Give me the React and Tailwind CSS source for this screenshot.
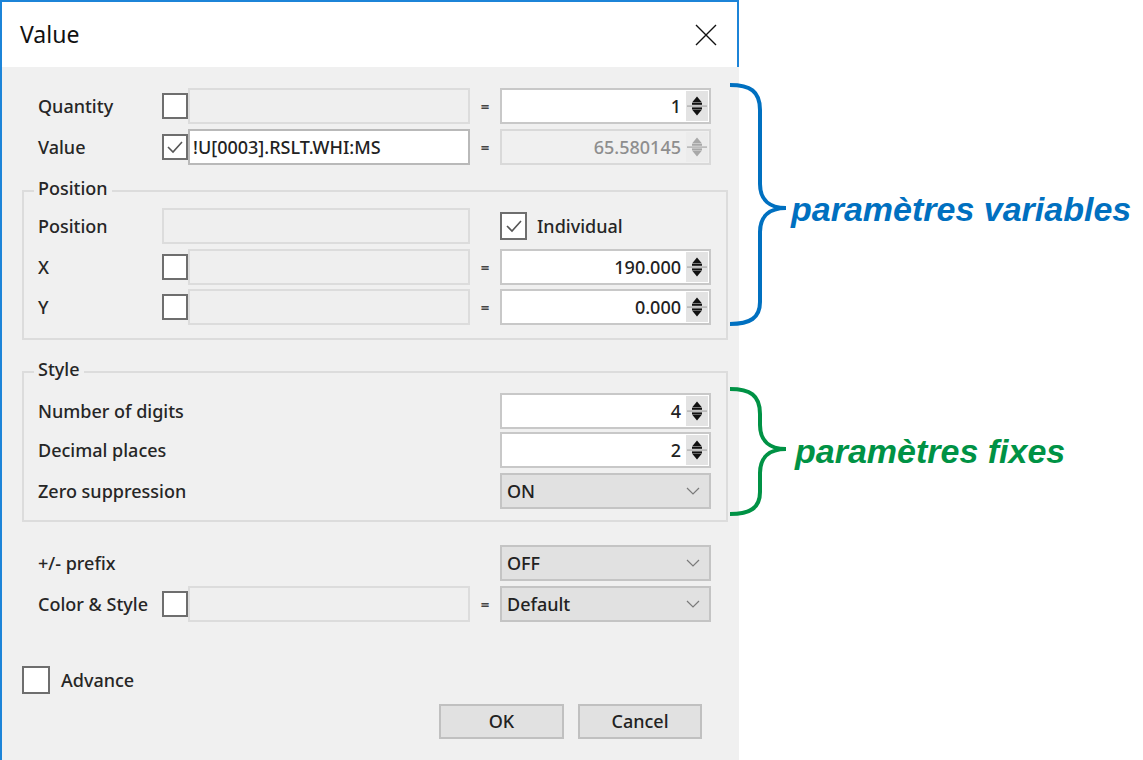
import React from "react";

const F = "font-['Noto_Sans',sans-serif]";

function Check({ checked, size = "w-[26px] h-[26px]" }) {
  return (
    <div className={`${size} shrink-0 border-2 border-[#6e6e6e] bg-white flex items-center justify-center`}>
      {checked && (
        <svg width="20" height="20" viewBox="0 0 20 20">
          <polyline points="3,10 8,15 17,5" fill="none" stroke="#555" strokeWidth="1.6" />
        </svg>
      )}
    </div>
  );
}

function SpinButtons({ disabled }) {
  const c = disabled ? "#a8a8a8" : "#111";
  return (
    <div className={`w-[22px] h-[30px] shrink-0 ${disabled ? "bg-[#ececec]" : "bg-[#e3e3e3]"}`}>
      <svg width="22" height="30" viewBox="0 0 22 30">
        <path d="M6 11.5 L11 5.5 L16 11.5 Z" fill={c} />
        <rect x="6" y="12" width="10" height="1.8" fill={c} />
        <rect x="1" y="14.4" width="20" height="1.4" fill="#b0b0b0" />
        <rect x="6" y="16.4" width="10" height="1.8" fill={c} />
        <path d="M6 18.5 L16 18.5 L11 24.5 Z" fill={c} />
      </svg>
    </div>
  );
}

function Spin({ value, disabled }) {
  return (
    <div
      className={`w-[211px] h-[36px] shrink-0 border-2 flex items-center justify-end pr-[1px] ${
        disabled ? "border-[#d9d9d9] bg-[#f0f0f0] text-[#8e8e8e]" : "border-[#c8c8c8] bg-white text-[#222]"
      }`}
    >
      <span className="mr-[5px]">{value}</span>
      <SpinButtons disabled={disabled} />
    </div>
  );
}

function Combo({ value }) {
  return (
    <div className="w-[211px] h-[36px] shrink-0 border-2 border-[#c4c4c4] bg-[#e1e1e1] flex items-center pl-[5px] pr-[9px] text-[#222]">
      <span>{value}</span>
      <svg className="ml-auto" width="14" height="8" viewBox="0 0 14 8">
        <polyline points="1,1 7,7 13,1" fill="none" stroke="#7a7a7a" strokeWidth="1.2" />
      </svg>
    </div>
  );
}

function Field({ text, enabled, w = "w-[282px]" }) {
  return (
    <div
      className={`${w} h-[36px] shrink-0 border-2 flex items-center overflow-hidden whitespace-nowrap ${
        enabled ? "border-[#b9b9b9] bg-white text-[#222] pl-[3px]" : "border-[#dcdcdc] bg-[#efefef]"
      }`}
    >
      {text}
    </div>
  );
}

function Eq() {
  return <div className="w-[30px] shrink-0 text-center text-[#444] text-[15px] font-bold">=</div>;
}

function Label({ children }) {
  return <div className="w-[124px] shrink-0 whitespace-nowrap">{children}</div>;
}

function Row({ children, className = "" }) {
  return <div className={`flex items-center h-[36px] ${className}`}>{children}</div>;
}

function Legend({ children }) {
  return (
    <div className="-mt-[16px] -ml-[4px] w-fit bg-[#f0f0f0] px-[4px] h-[24px] leading-[24px]">{children}</div>
  );
}

function Brace({ color, h, mid }) {
  const b = h - 4;
  const d = `M2 3 C22 3 32 9 32 28 L32 ${mid - 24} C32 ${mid - 8} 42 ${mid} 58 ${mid} C42 ${mid} 32 ${mid + 8} 32 ${mid + 24} L32 ${b - 22} C32 ${b - 6} 22 ${b} 2 ${b}`;
  return (
    <svg width="62" height={h} viewBox={`0 0 62 ${h}`} className="shrink-0">
      <path d={d} fill="none" stroke={color} strokeWidth="4" />
    </svg>
  );
}

export default function App() {
  return (
    <div className={`w-[1143px] h-[760px] bg-white flex overflow-hidden ${F} text-[18px] font-medium text-[#262626]`}>
      {/* Dialog */}
      <div className="w-[739px] h-[760px] shrink-0 flex flex-col border-l-2 border-t-2 border-[#1c84d8]">
        <div className="h-[65px] shrink-0 bg-white border-r-2 border-[#1c84d8] flex items-center pl-[18px]">
          <span className="text-[23px] font-normal text-[#111]">Value</span>
          <svg className="ml-auto mr-[20px]" width="22" height="22" viewBox="0 0 22 22">
            <path d="M1 1 L21 21 M21 1 L1 21" stroke="#111" strokeWidth="1.4" />
          </svg>
        </div>
        <div className="flex-1 bg-[#f0f0f0] pl-[20px] flex flex-col">
          {/* Top rows */}
          <div className="mt-[21px] pl-[16px] flex flex-col gap-[5px]">
            <Row>
              <Label>Quantity</Label>
              <Check />
              <Field />
              <Eq />
              <Spin value="1" />
            </Row>
            <Row>
              <Label>Value</Label>
              <Check checked />
              <Field enabled text="!U[0003].RSLT.WHI:MS" />
              <Eq />
              <Spin value="65.580145" disabled />
            </Row>
          </div>

          {/* Position group */}
          <div className="mt-[25px] w-[706px] border-2 border-[#dcdcdc] pl-[14px] pb-[13px]">
            <Legend>Position</Legend>
            <Row className="mt-[8px]">
              <Label>Position</Label>
              <Field w="w-[308px]" />
              <div className="w-[30px] shrink-0" />
              <Check checked size="w-[27px] h-[28px]" />
              <span className="ml-[10px]">Individual</span>
            </Row>
            <Row className="mt-[5px]">
              <Label>X</Label>
              <Check />
              <Field />
              <Eq />
              <Spin value="190.000" />
            </Row>
            <Row className="mt-[4px]">
              <Label>Y</Label>
              <Check />
              <Field />
              <Eq />
              <Spin value="0.000" />
            </Row>
          </div>

          {/* Style group */}
          <div className="mt-[31px] w-[706px] border-2 border-[#dcdcdc] pl-[14px] pb-[11px]">
            <Legend>Style</Legend>
            <Row className="mt-[12px]">
              <div className="w-[462px] shrink-0">Number of digits</div>
              <Spin value="4" />
            </Row>
            <Row className="mt-[3px]">
              <div className="w-[462px] shrink-0">Decimal places</div>
              <Spin value="2" />
            </Row>
            <Row className="mt-[5px]">
              <div className="w-[462px] shrink-0">Zero suppression</div>
              <Combo value="ON" />
            </Row>
          </div>

          {/* Bottom rows */}
          <div className="pl-[16px]">
            <Row className="mt-[23px]">
              <div className="w-[462px] shrink-0">+/- prefix</div>
              <Combo value="OFF" />
            </Row>
            <Row className="mt-[5px]">
              <Label>Color &amp; Style</Label>
              <Check />
              <Field />
              <Eq />
              <Combo value="Default" />
            </Row>
          </div>

          <div className="mt-[44px] flex items-center">
            <Check size="w-[28px] h-[28px]" />
            <span className="ml-[11px]">Advance</span>
          </div>

          <div className="mt-[10px] flex justify-end pr-[37px] gap-[14px]">
            <button className="w-[125px] h-[35px] border-2 border-[#c0c0c0] bg-[#e1e1e1] text-[#222]">OK</button>
            <button className="w-[124px] h-[35px] border-2 border-[#c0c0c0] bg-[#e1e1e1] text-[#222]">Cancel</button>
          </div>
        </div>
      </div>

      {/* Annotations */}
      <div className="-ml-[11px] flex flex-col font-['Liberation_Sans',Arial,sans-serif] font-bold italic text-[34px]">
        <div className="mt-[82px] h-[246px] flex items-center">
          <Brace color="#0070c0" h={246} mid={126} />
          <span className="text-[#0070c0] whitespace-nowrap ml-[1px] mt-[8px]">paramètres variables</span>
        </div>
        <div className="mt-[58px] h-[132px] flex items-center">
          <Brace color="#009245" h={132} mid={63} />
          <span className="text-[#009245] whitespace-nowrap ml-[5px] -mt-[2px]">paramètres fixes</span>
        </div>
      </div>
    </div>
  );
}
